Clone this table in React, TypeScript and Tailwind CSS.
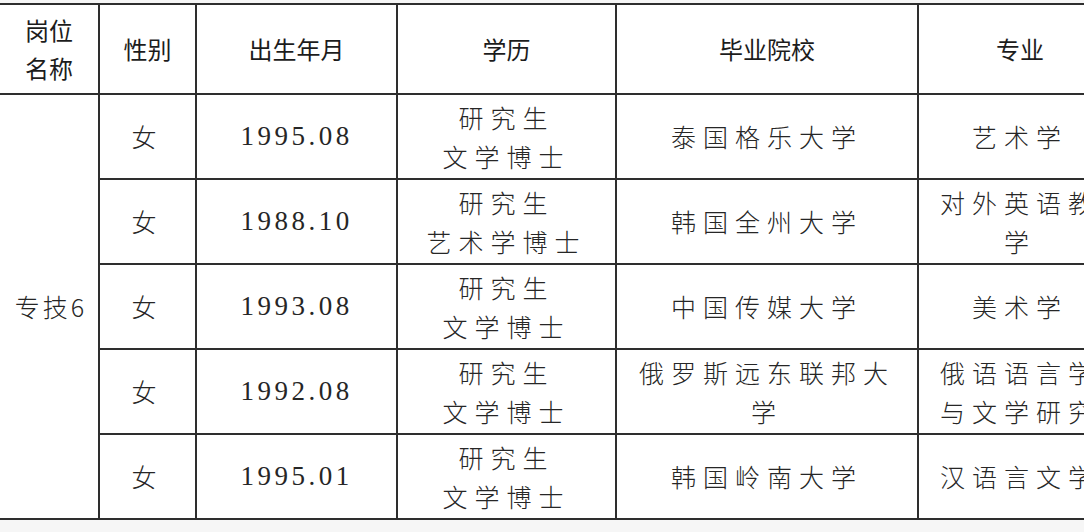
import React from "react";

// 招聘信息表截图 — 专技6 岗位拟聘人员

type Row = {
  gender: string;
  birth: string;
  degree: string[];
  school: string[];
  major: string[];
};

const rows: Row[] = [
  { gender: "女", birth: "1995.08", degree: ["研究生", "文学博士"], school: ["泰国格乐大学"], major: ["艺术学"] },
  { gender: "女", birth: "1988.10", degree: ["研究生", "艺术学博士"], school: ["韩国全州大学"], major: ["对外英语教", "学"] },
  { gender: "女", birth: "1993.08", degree: ["研究生", "文学博士"], school: ["中国传媒大学"], major: ["美术学"] },
  { gender: "女", birth: "1992.08", degree: ["研究生", "文学博士"], school: ["俄罗斯远东联邦大", "学"], major: ["俄语语言学", "与文学研究"] },
  { gender: "女", birth: "1995.01", degree: ["研究生", "文学博士"], school: ["韩国岭南大学"], major: ["汉语言文学"] },
];

const cjk = { fontFamily: '"Noto Sans CJK SC", "Noto Sans", sans-serif' };
const num = { fontFamily: '"Liberation Serif", "Noto Sans CJK SC", serif' };

function Lines({ lines }: { readonly lines: string[] }) {
  return (
    <>
      {lines.map((l) => (
        <div key={l} className="whitespace-nowrap leading-[39px]">
          {l}
        </div>
      ))}
    </>
  );
}

const cell = "border-2 border-[#2e2e2e] text-center align-middle p-0";
const th = "border-2 border-[#2e2e2e] text-center align-middle p-0 text-[24px] font-normal text-[#1c1c1c]";

export default function App() {
  return (
    <main className="w-[1084px] h-[532px] overflow-hidden bg-[#f6f6f6] pt-[3px]" style={cjk}>
      <table className="table-fixed border-collapse bg-white w-[1122px] text-[#262626]">
        <colgroup>
          <col className="w-[99px]" />
          <col className="w-[97px]" />
          <col className="w-[201px]" />
          <col className="w-[219px]" />
          <col className="w-[302px]" />
          <col className="w-[204px]" />
        </colgroup>
        <thead>
          <tr className="h-[90px]">
            <th className={`${th} border-l-0`}>
              <div className="leading-[38px]">岗位</div>
              <div className="leading-[38px]">名称</div>
            </th>
            <th className={th}>性别</th>
            <th className={th}>出生年月</th>
            <th className={th}>学历</th>
            <th className={th}>毕业院校</th>
            <th className={th}>专业</th>
          </tr>
        </thead>
        <tbody className="text-[25px] font-light tracking-[7px]">
          {rows.map((r, i) => (
            <tr key={r.birth} className="h-[85px]">
              {i === 0 && (
                <td rowSpan={rows.length} className={`${cell} border-l-0 tracking-[3px] pl-[4px]`}>
                  专技6
                </td>
              )}
              <td className={cell}>{r.gender}</td>
              <td className={`${cell} text-[27px] font-normal tracking-[3.5px]`} style={num}>
                {r.birth}
              </td>
              <td className={cell}>
                <Lines lines={r.degree} />
              </td>
              <td className={cell}>
                <Lines lines={r.school} />
              </td>
              <td className={cell}>
                <Lines lines={r.major} />
              </td>
            </tr>
          ))}
        </tbody>
      </table>
    </main>
  );
}
